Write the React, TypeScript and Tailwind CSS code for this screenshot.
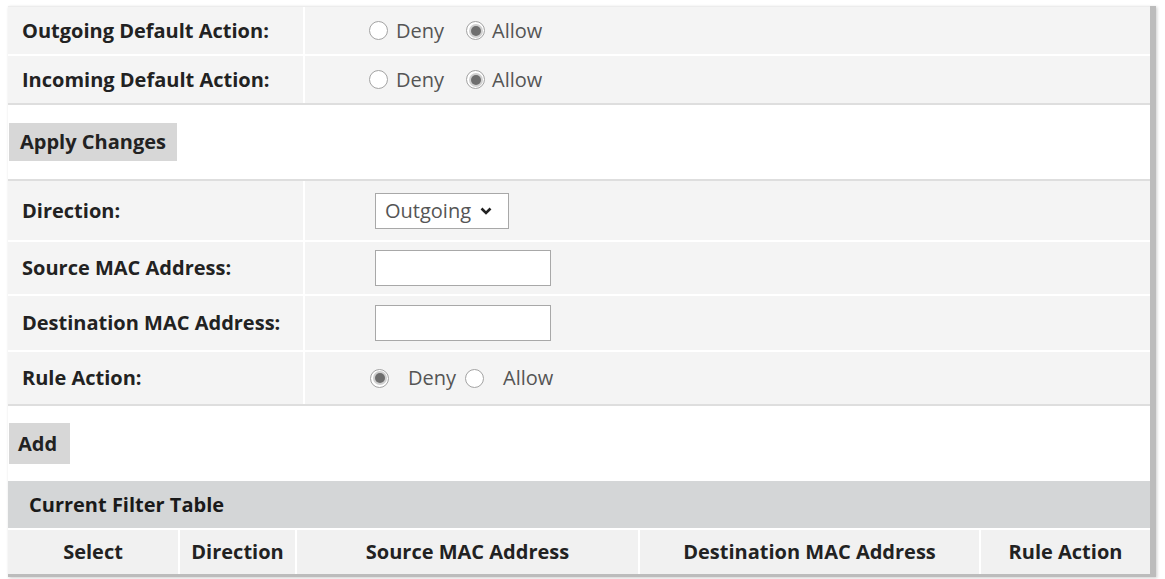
import React from "react";

const font = { fontFamily: '"Open Sans", "Noto Sans", Arial, sans-serif' };

function Radio({ checked }: { checked?: boolean }) {
  return (
    <span className="inline-flex h-[19px] w-[19px] shrink-0 items-center justify-center rounded-full border-[1.5px] border-[#a3a3a3] bg-white">
      {checked && <span className="h-[10px] w-[10px] rounded-full bg-[#6e6e6e] shadow-[0_0_0_2px_#d0d0d0]" />}
    </span>
  );
}

function Label({ children }: { children: React.ReactNode }) {
  return (
    <div className="flex w-[297px] shrink-0 items-center border-r-2 border-white pl-[14px] text-[20px] font-bold text-[#222]">
      {children}
    </div>
  );
}

function DefaultChoice() {
  return (
    <div className="flex items-center pl-[64px] text-[20px] text-[#555]">
      <Radio />
      <span className="ml-[8px]">Deny</span>
      <span className="ml-[22px] flex"><Radio checked /></span>
      <span className="ml-[7px]">Allow</span>
    </div>
  );
}

export default function App() {
  return (
    <div className="min-h-[579px] bg-white pl-[8px] pt-[6px]" style={font}>
      <div className="w-[1148px] border-r-[6px] border-b-[3px] border-[#bcbcbc] bg-white shadow-[1px_1px_3px_rgba(0,0,0,0.2)]">
        {/* Default actions */}
        <div className="border-t border-[#ececec] bg-[#f4f4f4]">
          <div className="flex h-[49px] border-b-2 border-white">
            <Label>Outgoing Default Action:</Label>
            <DefaultChoice />
          </div>
          <div className="flex h-[47px]">
            <Label>Incoming Default Action:</Label>
            <DefaultChoice />
          </div>
        </div>
        <div className="h-[2px] bg-[#dedede]" />
        <div className="flex h-[74px] items-center pl-[1px]">
          <div className="flex h-[38px] w-[168px] items-center bg-[#d7d7d7] pl-[11px] text-[20px] font-bold text-[#222]">
            Apply Changes
          </div>
        </div>
        <div className="h-[2px] bg-[#dedede]" />

        {/* Rule form */}
        <div className="bg-[#f4f4f4]">
          <div className="flex h-[61px] border-b-2 border-white">
            <Label>Direction:</Label>
            <div className="flex items-center pl-[70px]">
              <div className="flex h-[36px] w-[134px] items-center border border-[#a8a8a8] bg-white pl-[9px] text-[20px] text-[#555]">
                Outgoing
                <svg className="ml-[8px]" width="14" height="12" viewBox="0 0 14 12">
                  <path d="M2.5 3.5 L7 8 L11.5 3.5" fill="none" stroke="#222" strokeWidth="2.6" />
                </svg>
              </div>
            </div>
          </div>
          <div className="flex h-[54px] border-b-2 border-white">
            <Label>Source MAC Address:</Label>
            <div className="flex items-center pl-[70px]">
              <div className="h-[36px] w-[176px] border border-[#a8a8a8] bg-white" />
            </div>
          </div>
          <div className="flex h-[56px] border-b-2 border-white">
            <Label>Destination MAC Address:</Label>
            <div className="flex items-center pl-[70px]">
              <div className="h-[36px] w-[176px] border border-[#a8a8a8] bg-white" />
            </div>
          </div>
          <div className="flex h-[52px]">
            <Label>Rule Action:</Label>
            <div className="flex items-center pl-[65px] text-[20px] text-[#555]">
              <Radio checked />
              <span className="ml-[19px]">Deny</span>
              <span className="ml-[9px] flex"><Radio /></span>
              <span className="ml-[19px]">Allow</span>
            </div>
          </div>
        </div>
        <div className="h-[2px] bg-[#dedede]" />
        <div className="flex h-[75px] items-center pl-[1px]">
          <div className="flex h-[41px] w-[61px] items-center bg-[#d7d7d7] pl-[9px] text-[20px] font-bold text-[#222]">
            Add
          </div>
        </div>

        {/* Current filter table */}
        <div className="flex h-[47px] items-center bg-[#d4d6d7] pl-[21px] text-[20px] font-bold text-[#1a1a1a]">
          Current Filter Table
        </div>
        <div className="flex h-[46px] border-t-2 border-white bg-[#f1f1f1] text-[20px] font-bold text-[#222]">
          <div className="flex w-[172px] items-center justify-center border-r-2 border-white">Select</div>
          <div className="flex w-[117px] items-center justify-center border-r-2 border-white">Direction</div>
          <div className="flex w-[343px] items-center justify-center border-r-2 border-white">Source MAC Address</div>
          <div className="flex w-[341px] items-center justify-center border-r-2 border-white">Destination MAC Address</div>
          <div className="flex flex-1 items-center justify-center">Rule Action</div>
        </div>
      </div>
    </div>
  );
}
